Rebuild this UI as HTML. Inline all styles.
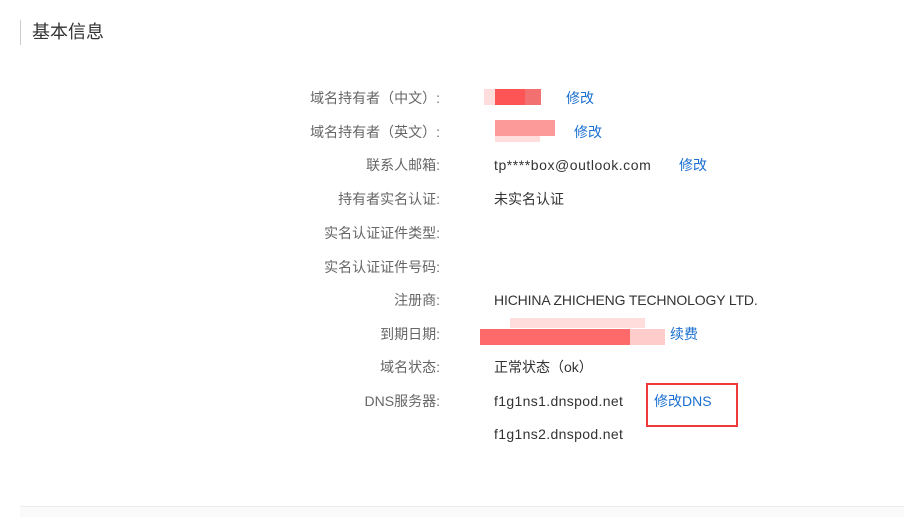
<!DOCTYPE html>
<html><head><meta charset="utf-8"><style>
body{margin:0;width:904px;height:516px;background:#fff;position:relative;overflow:hidden;font-family:"Liberation Sans","Noto Sans CJK SC",sans-serif;font-size:14px}
.t{position:absolute;left:20px;top:20px;height:25px;border-left:1px solid #ccc;padding-left:11px;font-size:18px;color:#333;line-height:25px}
.l{position:absolute;right:464px;color:#666;white-space:nowrap;line-height:18px}
.v{position:absolute;left:494px;color:#333;white-space:nowrap;line-height:18px}
.a{position:absolute;color:#1a6fd0;white-space:nowrap;line-height:18px}
.r{position:absolute}
.bot{position:absolute;left:20px;top:506px;right:0;height:10px;background:#fafafa;border-top:1px solid #eee}
</style></head><body>
<div class="t">基本信息</div>
<div class="l" style="top:89px">域名持有者（中文）:</div>
<div class="r" style="left:484px;top:89px;width:12px;height:16px;background:#fdd"></div>
<div class="r" style="left:495px;top:89px;width:30px;height:16px;background:#fd5555"></div>
<div class="r" style="left:525px;top:89px;width:16px;height:16px;background:#f27070"></div>
<div class="a" style="left:566px;top:89px">修改</div>
<div class="l" style="top:123px">域名持有者（英文）:</div>
<div class="r" style="left:495px;top:120px;width:60px;height:16px;background:#fc9a9a"></div>
<div class="r" style="left:495px;top:136px;width:45px;height:6px;background:#fdd"></div>
<div class="a" style="left:574px;top:123px">修改</div>
<div class="l" style="top:156px">联系人邮箱:</div>
<div class="v" style="top:156px;letter-spacing:0.55px">tp****box@outlook.com</div>
<div class="a" style="left:679px;top:156px">修改</div>
<div class="l" style="top:190px">持有者实名认证:</div>
<div class="v" style="top:190px">未实名认证</div>
<div class="l" style="top:224px">实名认证证件类型:</div>
<div class="l" style="top:258px">实名认证证件号码:</div>
<div class="l" style="top:291px">注册商:</div>
<div class="v" style="top:291px;letter-spacing:-0.15px">HICHINA ZHICHENG TECHNOLOGY LTD.</div>
<div class="l" style="top:325px">到期日期:</div>
<div class="r" style="left:510px;top:318px;width:135px;height:10px;background:#fdd"></div>
<div class="r" style="left:480px;top:329px;width:175px;height:16px;background:#fe6a6a"></div>
<div class="r" style="left:630px;top:329px;width:35px;height:16px;background:#fcc"></div>
<div class="a" style="left:670px;top:325px">续费</div>
<div class="l" style="top:358px">域名状态:</div>
<div class="v" style="top:358px">正常状态（ok）</div>
<div class="l" style="top:392px">DNS服务器:</div>
<div class="v" style="top:392px;letter-spacing:0.35px">f1g1ns1.dnspod.net</div>
<div class="a" style="left:654px;top:392px">修改DNS</div>
<div class="r" style="left:646px;top:383px;width:88px;height:40px;border:2px solid #f03a3a"></div>
<div class="v" style="top:425px;letter-spacing:0.35px">f1g1ns2.dnspod.net</div>
<div class="bot"></div>
</body></html>
